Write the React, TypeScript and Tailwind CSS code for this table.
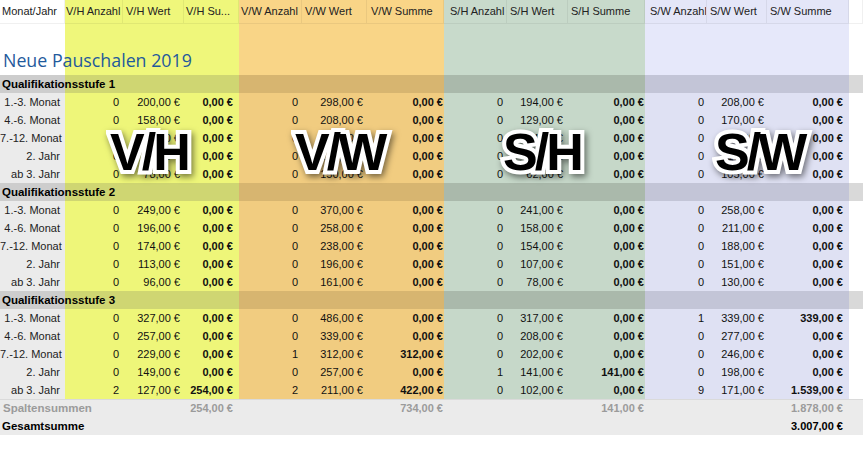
import React from "react";

type Group = {
  title: string;
  rows: string[][];
};

const groups: Group[] = [
  {
    title: "Qualifikationsstufe 1",
    rows: [
      ["1.-3. Monat", "0", "200,00 €", "0,00 €", "0", "298,00 €", "0,00 €", "0", "194,00 €", "0,00 €", "0", "208,00 €", "0,00 €"],
      ["4.-6. Monat", "0", "158,00 €", "0,00 €", "0", "208,00 €", "0,00 €", "0", "129,00 €", "0,00 €", "0", "170,00 €", "0,00 €"],
      ["7.-12. Monat", "0", "137,00 €", "0,00 €", "0", "190,00 €", "0,00 €", "0", "114,00 €", "0,00 €", "0", "140,00 €", "0,00 €"],
      ["2. Jahr", "0", "97,00 €", "0,00 €", "0", "162,00 €", "0,00 €", "0", "85,00 €", "0,00 €", "0", "118,00 €", "0,00 €"],
      ["ab 3. Jahr", "0", "78,00 €", "0,00 €", "0", "150,00 €", "0,00 €", "0", "62,00 €", "0,00 €", "0", "105,00 €", "0,00 €"],
    ],
  },
  {
    title: "Qualifikationsstufe 2",
    rows: [
      ["1.-3. Monat", "0", "249,00 €", "0,00 €", "0", "370,00 €", "0,00 €", "0", "241,00 €", "0,00 €", "0", "258,00 €", "0,00 €"],
      ["4.-6. Monat", "0", "196,00 €", "0,00 €", "0", "258,00 €", "0,00 €", "0", "158,00 €", "0,00 €", "0", "211,00 €", "0,00 €"],
      ["7.-12. Monat", "0", "174,00 €", "0,00 €", "0", "238,00 €", "0,00 €", "0", "154,00 €", "0,00 €", "0", "188,00 €", "0,00 €"],
      ["2. Jahr", "0", "113,00 €", "0,00 €", "0", "196,00 €", "0,00 €", "0", "107,00 €", "0,00 €", "0", "151,00 €", "0,00 €"],
      ["ab 3. Jahr", "0", "96,00 €", "0,00 €", "0", "161,00 €", "0,00 €", "0", "78,00 €", "0,00 €", "0", "130,00 €", "0,00 €"],
    ],
  },
  {
    title: "Qualifikationsstufe 3",
    rows: [
      ["1.-3. Monat", "0", "327,00 €", "0,00 €", "0", "486,00 €", "0,00 €", "0", "317,00 €", "0,00 €", "1", "339,00 €", "339,00 €"],
      ["4.-6. Monat", "0", "257,00 €", "0,00 €", "0", "339,00 €", "0,00 €", "0", "208,00 €", "0,00 €", "0", "277,00 €", "0,00 €"],
      ["7.-12. Monat", "0", "229,00 €", "0,00 €", "1", "312,00 €", "312,00 €", "0", "202,00 €", "0,00 €", "0", "246,00 €", "0,00 €"],
      ["2. Jahr", "0", "149,00 €", "0,00 €", "0", "257,00 €", "0,00 €", "1", "141,00 €", "141,00 €", "0", "198,00 €", "0,00 €"],
      ["ab 3. Jahr", "2", "127,00 €", "254,00 €", "2", "211,00 €", "422,00 €", "0", "102,00 €", "0,00 €", "9", "171,00 €", "1.539,00 €"],
    ],
  },
];

const headers = [
  "Monat/Jahr", "V/H Anzahl", "V/H Wert", "V/H Su...", "V/W Anzahl", "V/W Wert", "V/W Summe",
  "S/H Anzahl", "S/H Wert", "S/H Summe", "S/W Anzahl", "S/W Wert", "S/W Summe", "",
];

const COLS =
  "grid grid-cols-[65px_58px_61px_55px_63px_65px_77px_63px_61px_77px_62px_60px_82px_14px]";

// which colour band each column belongs to
const grp = [0, 1, 1, 1, 2, 2, 2, 3, 3, 3, 4, 4, 4, 5];

const BG = {
  header: ["bg-white", "bg-[#eff77b]", "bg-[#f9d587]", "bg-[#c8dacb]", "bg-[#e4e6f8]", "bg-white"],
  title: ["bg-white", "bg-[#eff77b]", "bg-[#f9d587]", "bg-[#c8dacb]", "bg-[#e6e8fa]", "bg-white"],
  group: ["bg-[#cdcdcd]", "bg-[#cfd672]", "bg-[#d7b570]", "bg-[#aab9ab]", "bg-[#c3c5d7]", "bg-[#d9d9d9]"],
  data: ["bg-[#ebebeb]", "bg-[#eef679]", "bg-[#f1cc80]", "bg-[#c6d8c9]", "bg-[#dfe1f3]", "bg-white"],
};

const padR = [
  "pr-[5px]", "pr-[4px]", "pr-[4px]", "pr-[6px]", "pr-[4px]", "pr-[4px]", "pr-[1px]",
  "pr-[4px]", "pr-[5px]", "pr-[1px]", "pr-[3px]", "pr-[3px]", "pr-[6px]", "",
];

const padL = [
  "pl-[2px]", "pl-[1px]", "pl-[3px]", "pl-[2px]", "pl-[2px]", "pl-[3px]", "pl-[4px]",
  "pl-[6px]", "pl-[3px]", "pl-[3px]", "pl-[5px]", "pl-[3px]", "pl-[3px]", "",
];

const stamp =
  "absolute top-[126px] font-['Liberation_Sans',Arial,sans-serif] font-bold text-[52px] leading-[52px] tracking-[-3px] text-black [-webkit-text-stroke:8px_white] [paint-order:stroke_fill] drop-shadow-[2px_3px_3px_rgba(0,0,0,0.5)]";

const isSum = (i: number) => i > 0 && i < 13 && i % 3 === 0;

const App = () => {
  return (
    <div className="relative w-[863px] h-[452px] overflow-hidden bg-white font-['Liberation_Sans',Arial,sans-serif] text-[11px] text-[#111]">
      {/* header */}
      <div className={`${COLS} h-[24px]`}>
        {headers.map((h, i) => (
          <div
            key={i}
            className={`${BG.header[grp[i]]} ${padL[i]} border-r border-b border-black/[0.06] leading-[23px] whitespace-nowrap overflow-hidden text-[#222]`}
          >
            {h}
          </div>
        ))}
      </div>

      {/* title band */}
      <div className={`${COLS} h-[51px]`}>
        {grp.map((g, i) => (
          <div key={i} className={`${BG.title[g]} flex items-end pb-[3px]`}>
            {i === 0 && (
              <span className="relative z-10 pl-[3px] whitespace-nowrap font-['Open_Sans',sans-serif] text-[17.8px] leading-[24px] text-[#1f5a9c]">
                Neue Pauschalen 2019
              </span>
            )}
          </div>
        ))}
      </div>

      {groups.map((group) => (
        <div key={group.title}>
          <div className={`${COLS} h-[18px] leading-[18px]`}>
            {grp.map((g, i) => (
              <div key={i} className={`${BG.group[g]}`}>
                {i === 0 && (
                  <span className="relative z-10 block pl-[2px] whitespace-nowrap font-bold text-[11.5px] text-black">
                    {group.title}
                  </span>
                )}
              </div>
            ))}
          </div>
          {group.rows.map((row) => (
            <div key={row[0]} className={`${COLS} h-[18px] leading-[18px]`}>
              {grp.map((g, i) => (
                <div
                  key={i}
                  className={`${BG.data[g]} ${padR[i]} text-right whitespace-nowrap ${isSum(i) ? "font-bold" : ""} ${i === 0 ? "text-[#222]" : ""}`}
                >
                  {row[i] ?? ""}
                </div>
              ))}
            </div>
          ))}
        </div>
      ))}

      {/* column sums */}
      <div className={`${COLS} h-[18px] leading-[17px] bg-[#ebebeb] border-t border-[#dadada]`}>
        {grp.map((_, i) => (
          <div key={i} className={`${padR[i]} text-right whitespace-nowrap font-bold text-[#9b9b9b]`}>
            {i === 0 && (
              <span className="relative z-10 block text-left pl-[3px] text-[11.5px]">Spaltensummen</span>
            )}
            {i === 3 && "254,00 €"}
            {i === 6 && "734,00 €"}
            {i === 9 && "141,00 €"}
            {i === 12 && "1.878,00 €"}
          </div>
        ))}
      </div>
      <div className={`${COLS} h-[18px] leading-[18px] bg-[#ebebeb]`}>
        {grp.map((_, i) => (
          <div key={i} className={`${padR[i]} text-right whitespace-nowrap font-bold text-black`}>
            {i === 0 && (
              <span className="relative z-10 block text-left pl-[2px] text-[11.5px]">Gesamtsumme</span>
            )}
            {i === 12 && "3.007,00 €"}
          </div>
        ))}
      </div>

      {/* big overlay labels */}
      <div className={`${stamp} left-[110px]`}>V/H</div>
      <div className={`${stamp} left-[295px]`}>V/W</div>
      <div className={`${stamp} left-[503px]`}>S/H</div>
      <div className={`${stamp} left-[715px]`}>S/W</div>
    </div>
  );
};

export default App;
